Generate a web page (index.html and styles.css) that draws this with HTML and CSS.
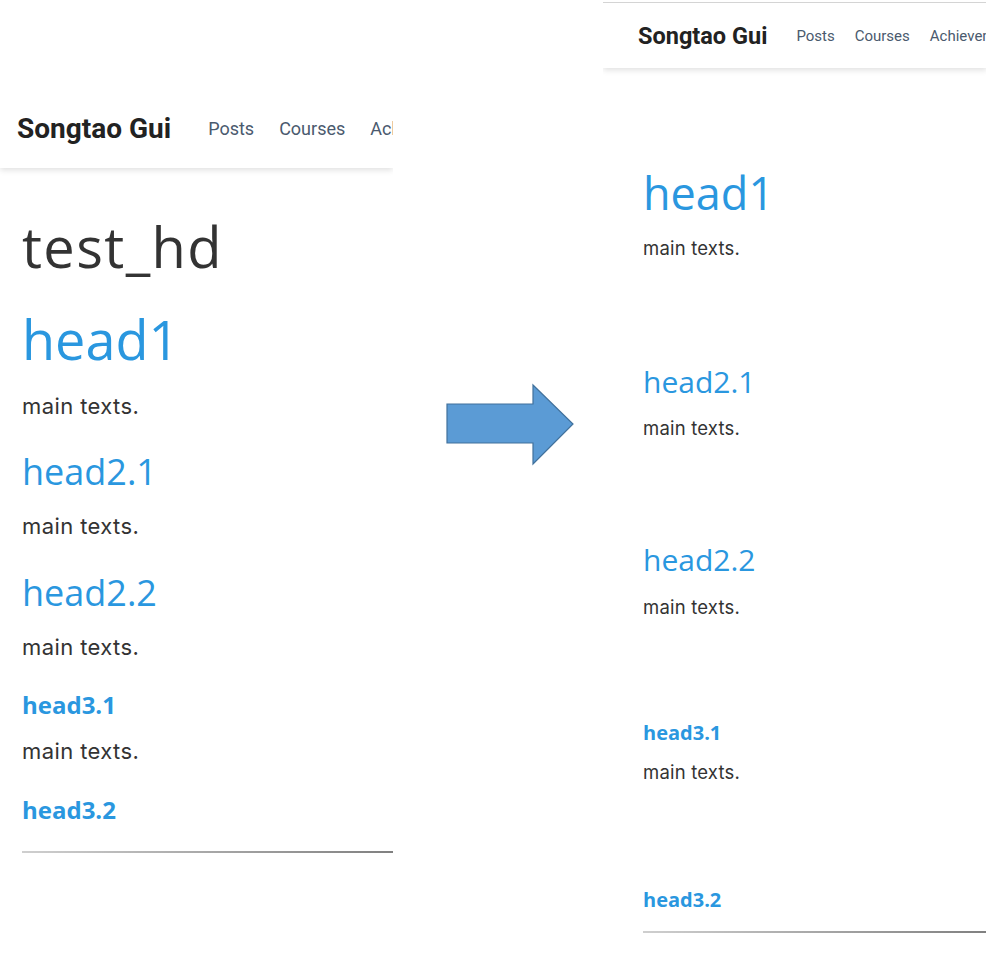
FILE: index.html
```html
<!DOCTYPE html>
<html lang="en">
<head>
<meta charset="utf-8">
<title>Songtao Gui — test_hd</title>
<link rel="stylesheet" href="styles.css">
</head>
<body>
<div class="canvas">
  <section class="shot shot-before">
    <header class="topbar">
      <span class="brand">Songtao Gui</span>
      <nav class="nav">
        <a class="nav-link">Posts</a>
        <a class="nav-link">Courses</a>
        <a class="nav-link">Achievements</a>
      </nav>
    </header>
    <article class="post">
      <h1 class="title">test_hd</h1>
      <h1 class="h1 m-h1">head1</h1>
      <p class="txt m-p1">main texts.</p>
      <h2 class="h2 m-h2">head2.1</h2>
      <p class="txt m-p2">main texts.</p>
      <h2 class="h2 m-h2b">head2.2</h2>
      <p class="txt m-p3">main texts.</p>
      <h3 class="h3 m-h3">head3.1</h3>
      <p class="txt m-p4">main texts.</p>
      <h3 class="h3 m-h3b">head3.2</h3>
      <div class="rule m-rule"></div>
    </article>
  </section>

  <svg class="arrow" width="129" height="84" viewBox="0 0 129 84" aria-hidden="true">
    <polygon points="1,21 87,21 87,2 127,41 87,81 87,60 1,60" fill="#5b9bd5" stroke="#41719c" stroke-width="1.2" stroke-linejoin="miter"/>
  </svg>

  <section class="shot shot-after">
    <header class="topbar">
      <span class="brand">Songtao Gui</span>
      <nav class="nav">
        <a class="nav-link">Posts</a>
        <a class="nav-link">Courses</a>
        <a class="nav-link">Achievements</a>
      </nav>
    </header>
    <article class="post">
      <h1 class="h1 r-h1">head1</h1>
      <p class="txt r-p">main texts.</p>
      <h2 class="h2 r-h2">head2.1</h2>
      <p class="txt r-p">main texts.</p>
      <h2 class="h2 r-h2b">head2.2</h2>
      <p class="txt r-p2">main texts.</p>
      <h3 class="h3 r-h3">head3.1</h3>
      <p class="txt r-p3">main texts.</p>
      <h3 class="h3 r-h3b">head3.2</h3>
      <div class="rule r-rule"></div>
    </article>
  </section>
</div>
</body>
</html>
```

FILE: styles.css
```css
* { box-sizing: border-box; }

html, body {
  margin: 0;
  padding: 0;
  background: #ffffff;
}

body {
  width: 986px;
  height: 957px;
  overflow: hidden;
  font-family: "Inter", "Roboto", sans-serif;
}

.canvas {
  display: flex;
  align-items: flex-start;
  width: 986px;
}

/* ---------- screenshot panels ---------- */
.shot {
  flex: none;
  overflow: hidden;
  background: #fff;
}

.shot-before {
  width: 393px;
  margin-top: 88px;
}

.shot-after {
  width: 384px;
  margin-top: 2px;
  margin-left: 28px;
  border-top: 1px solid #d4d4d4;
}

.arrow {
  flex: none;
  display: block;
  margin-top: 383px;
  margin-left: 53px;
}

/* ---------- top bar ---------- */
.topbar {
  display: flex;
  align-items: center;
  white-space: nowrap;
  background: #fff;
  box-shadow: 0 2px 6px rgba(0, 0, 0, 0.13);
  position: relative;
  margin-bottom: 8px;
}

.nav {
  display: flex;
  align-items: center;
}

.brand {
  font-family: "Roboto", sans-serif;
  font-weight: 700;
  color: #222;
}

.nav-link {
  font-family: "Roboto", sans-serif;
  color: #4a5a6e;
  text-decoration: none;
}

.shot-before .topbar {
  height: 80px;
  padding-left: 17px;
}
.shot-before .brand { font-size: 28px; }
.shot-before .nav { margin-left: 37px; gap: 25px; }
.shot-before .nav-link { font-size: 18px; }

.shot-after .topbar {
  height: 65px;
  padding-left: 35px;
}
.shot-after .brand { font-size: 23.5px; }
.shot-after .nav { margin-left: 29px; gap: 20px; }
.shot-after .nav-link { font-size: 15px; }

/* ---------- article ---------- */
.post {
  display: flex;
  flex-direction: column;
  align-items: flex-start;
}

.shot-before .post { padding-left: 22px; margin-top: -8px; }
.shot-after .post { padding-left: 40px; margin-top: -8px; }

.title,
.h1,
.h2,
.h3 {
  font-family: "Open Sans", "DejaVu Sans", sans-serif;
  margin: 0;
  line-height: 1.2;
  white-space: nowrap;
}

.title {
  font-size: 56px;
  font-weight: 400;
  letter-spacing: 1.4px;
  color: #333;
}

.h1, .h2 { font-weight: 400; color: #2a97df; }
.h3 { font-weight: 700; color: #2a97df; }

.txt {
  margin: 0;
  font-size: 22px;
  letter-spacing: 0.4px;
  line-height: 1.2;
  color: #333;
  white-space: nowrap;
}

.rule {
  align-self: stretch;
  height: 2px;
  background: linear-gradient(to right, #cfcfcf, #808080);
}

/* left ("before") vertical rhythm */
.shot-before .title { margin-top: 45px; }
.shot-before .h1 { font-size: 54px; }
.shot-before .h2 { font-size: 36px; }
.shot-before .h3 { font-size: 24px; }
.m-h1 { margin-top: 27px; }
.m-p1 { margin-top: 21px; }
.m-h2 { margin-top: 31px; }
.m-p2 { margin-top: 19.5px; }
.m-h2b { margin-top: 31.5px; }
.m-p3 { margin-top: 20px; }
.m-h3 { margin-top: 30px; }
.m-p4 { margin-top: 19px; }
.m-h3b { margin-top: 31px; }
.m-rule { margin-top: 26px; }

/* right ("after") vertical rhythm */
.shot-after .txt { font-size: 18.5px; letter-spacing: 0.2px; }
.shot-after .h1 { font-size: 45px; }
.shot-after .h2 { font-size: 30px; }
.shot-after .h3 { font-size: 20px; }
.r-h1 { margin-top: 98px; }
.r-p { margin-top: 17px; }
.r-h2 { margin-top: 105px; }
.r-h2b { margin-top: 103px; }
.r-p2 { margin-top: 18px; }
.r-h3 { margin-top: 102px; }
.r-p3 { margin-top: 16px; }
.r-h3b { margin-top: 105px; }
.r-rule { margin-top: 19px; }
```
